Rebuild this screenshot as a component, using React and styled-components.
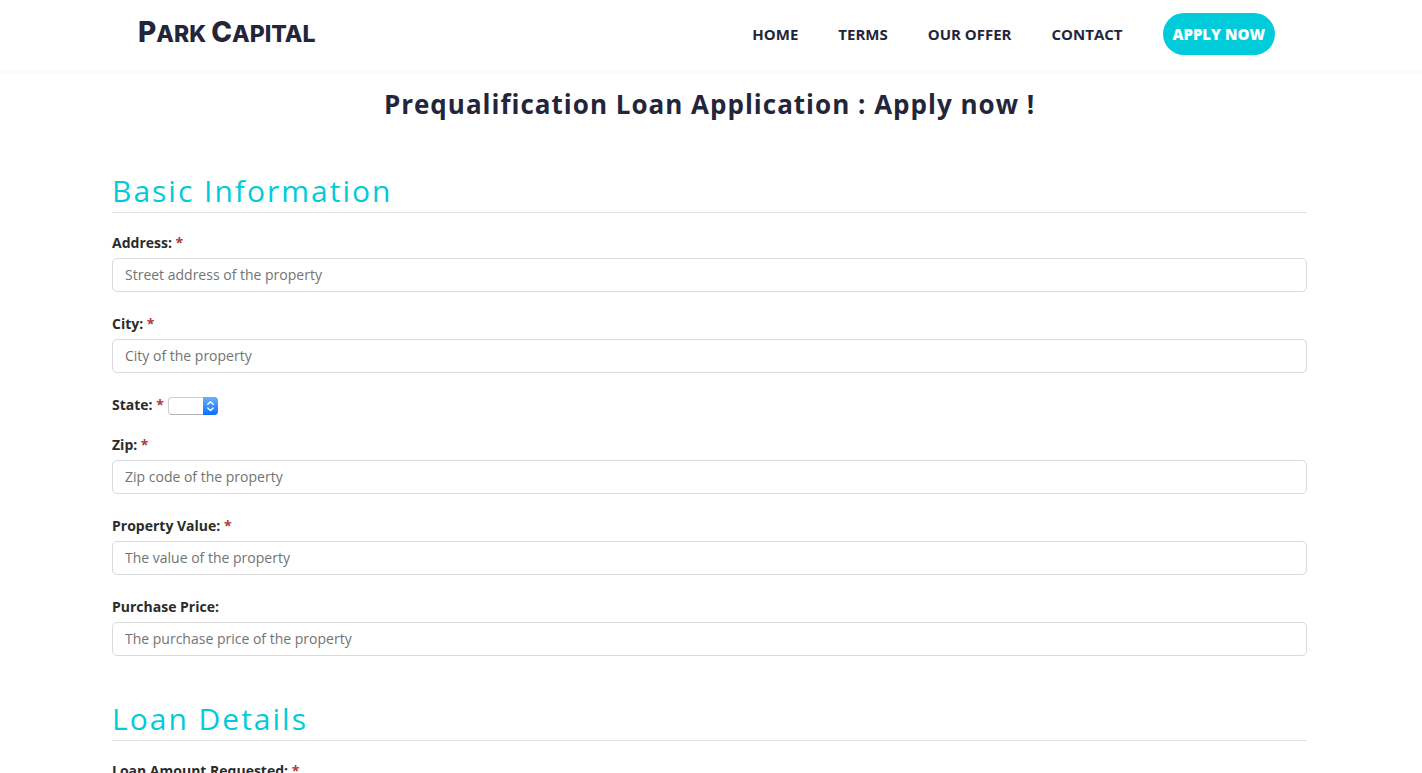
import React from "react";
import styled, { createGlobalStyle } from "styled-components";

const ink = "#23263a";
const accent = "#00cbdb";

const GlobalStyle = createGlobalStyle`
  *, *::before, *::after { box-sizing: border-box; }
  body {
    margin: 0;
    background: #fff;
    color: #2b2b2b;
    font-family: "Open Sans", "Noto Sans", sans-serif;
    font-size: 14px;
    line-height: 20px;
  }
`;

const Header = styled.header`
  display: flex;
  align-items: center;
  justify-content: space-between;
  height: 70px;
  padding: 0 147px 0 138px;
  background: #fff;
  box-shadow: 0 4px 0 #fbfbfb;
`;

const Logo = styled.a`
  color: ${ink};
  font-family: Inter, "Liberation Sans", sans-serif;
  font-size: 23px;
  font-weight: 800;
  line-height: 28px;
  padding-bottom: 4px;
  text-decoration: none;
`;

const Capital = styled.span`
  font-size: 28px;
`;

const Nav = styled.nav`
  display: flex;
  align-items: center;
  gap: 40px;
  padding-bottom: 2px;
`;

const NavLink = styled.a`
  color: ${ink};
  font-size: 15px;
  font-weight: 700;
  text-decoration: none;
`;

const ApplyLink = styled(NavLink)`
  padding: 11px 10px;
  border-radius: 21px;
  background: ${accent};
  color: #fff;
  font-weight: 800;
`;

const Main = styled.main`
  padding: 14px 115px 40px 112px;
`;

const Title = styled.h1`
  margin: 0 0 46px;
  color: ${ink};
  font-size: 26px;
  font-weight: 700;
  line-height: 40px;
  letter-spacing: 1px;
  text-align: center;
`;

const Form = styled.form`
  display: flex;
  flex-direction: column;
  gap: 40px;
`;

const Section = styled.section`
  display: flex;
  flex-direction: column;
  gap: 20px;
`;

const SectionTitle = styled.h2`
  margin: 0;
  border-bottom: 1px solid #e3e3e3;
  color: ${accent};
  font-size: 30px;
  font-weight: 500;
  line-height: 42px;
  letter-spacing: 2px;
`;

const Field = styled.div`
  display: flex;
  flex-direction: column;
  gap: 5px;
  padding-bottom: 2px;
`;

const InlineField = styled.div`
  display: flex;
  align-items: center;
  gap: 4px;
  height: 20px;
`;

const Label = styled.label`
  font-weight: 700;
`;

const Required = styled.span`
  color: #ad3b3b;
`;

const TextInput = styled.input`
  width: 100%;
  height: 34px;
  padding: 5px 12px 7px;
  border: 1px solid #dadada;
  border-radius: 5px;
  background: #fff;
  color: #2b2b2b;
  font: inherit;

  &::placeholder {
    color: #737373;
    opacity: 1;
  }
`;

const SelectBox = styled.span`
  display: grid;
  width: 50px;
  height: 18px;
  margin-top: 2px;
`;

const Select = styled.select`
  grid-area: 1 / 1;
  appearance: none;
  padding: 0 16px 0 4px;
  border: 1px solid #cfcfcf;
  border-bottom-color: #b5b5b5;
  border-radius: 4px;
  background: #fff;
  font: inherit;
  font-size: 11px;
  line-height: 16px;
`;

const Stepper = styled.svg`
  grid-area: 1 / 1;
  justify-self: end;
  width: 15px;
  height: 18px;
  border-radius: 0 4px 4px 0;
  background: linear-gradient(#6bb1fb, #0a70fd);
  pointer-events: none;
`;

function Caption({ id, text, required }) {
  return (
    <Label htmlFor={id}>
      {text}
      {required && <Required> *</Required>}
    </Label>
  );
}

function TextField({ id, label, placeholder, required }) {
  return (
    <Field>
      <Caption id={id} text={label} required={required} />
      <TextInput id={id} name={id} type="text" placeholder={placeholder} />
    </Field>
  );
}

const states = ["", "CA", "FL", "NJ", "NY", "TX"];

export default function App() {
  return (
    <>
      <GlobalStyle />
      <Header>
        <Logo href="#home">
          <Capital>P</Capital>ARK <Capital>C</Capital>APITAL
        </Logo>
        <Nav>
          <NavLink href="#home">HOME</NavLink>
          <NavLink href="#terms">TERMS</NavLink>
          <NavLink href="#offer">OUR OFFER</NavLink>
          <NavLink href="#contact">CONTACT</NavLink>
          <ApplyLink href="#apply">APPLY NOW</ApplyLink>
        </Nav>
      </Header>
      <Main>
        <Title>Prequalification Loan Application : Apply now !</Title>
        <Form>
          <Section>
            <SectionTitle>Basic Information</SectionTitle>
            <TextField id="address" label="Address:" placeholder="Street address of the property" required />
            <TextField id="city" label="City:" placeholder="City of the property" required />
            <InlineField>
              <Caption id="state" text="State:" required />
              <SelectBox>
                <Select id="state" name="state">
                  {states.map((s) => (
                    <option key={s} value={s}>{s}</option>
                  ))}
                </Select>
                <Stepper viewBox="0 0 15 18" fill="none" stroke="#fff" strokeWidth="1.4" strokeLinecap="round" strokeLinejoin="round" aria-hidden="true">
                  <path d="M4.8 7.3 7.5 4.8l2.7 2.5M4.8 10.9l2.7 2.5 2.7-2.5" />
                </Stepper>
              </SelectBox>
            </InlineField>
            <TextField id="zip" label="Zip:" placeholder="Zip code of the property" required />
            <TextField id="value" label="Property Value:" placeholder="The value of the property" required />
            <TextField id="price" label="Purchase Price:" placeholder="The purchase price of the property" />
          </Section>
          <Section>
            <SectionTitle>Loan Details</SectionTitle>
            <TextField id="amount" label="Loan Amount Requested:" required />
          </Section>
        </Form>
      </Main>
    </>
  );
}
